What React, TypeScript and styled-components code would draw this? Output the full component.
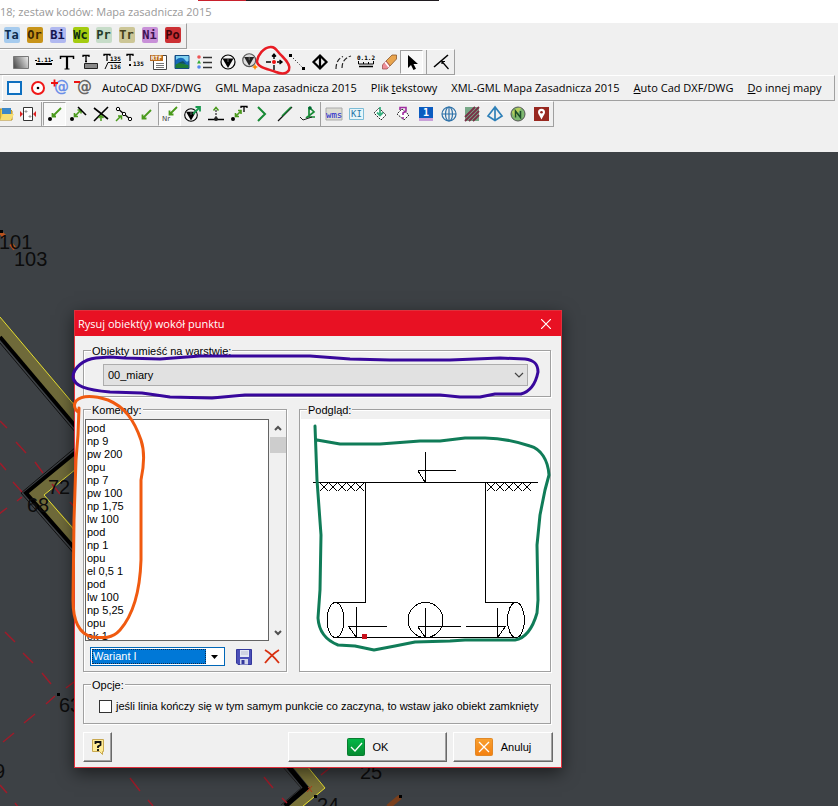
import React from "react";
import styled, { createGlobalStyle, css } from "styled-components";

const GlobalStyle = createGlobalStyle`
  *, *::before, *::after { box-sizing: border-box; }
  html, body, #root { height: 100%; }
  body { margin: 0; overflow: hidden; background: #3d4145; }
  button, select, textarea, input { font: inherit; color: inherit; margin: 0; }
`;

const uiFont = `"Open Sans", "Noto Sans", sans-serif`;
const dialogFont = `"Liberation Sans", Arial, sans-serif`;

const Page = styled.div`
  position: relative;
  display: flex;
  flex-direction: column;
  min-height: 100vh;
  overflow: hidden;
  font: 11px/16px ${uiFont};
  color: #000;
`;

const TopEdge = styled.div`
  display: grid;
  grid-template-columns: 198px 48px 193px 1fr;
  height: 1px;
  background: #fff;
`;
const EdgePart = styled.span<{ $color: string }>`
  background: ${(p) => p.$color};
`;

const TitleBar = styled.header`
  height: 22px;
  background: #fff;
  color: #999;
  line-height: 22px;
  white-space: nowrap;
`;

const Toolbars = styled.div`
  display: flex;
  flex-direction: column;
  align-items: flex-start;
  height: 129px;
  flex: none;
  background: #f0f0f0;
`;

const Toolbar = styled.div<{ $start: number; $end: number; $inset?: boolean; $lift?: boolean }>`
  display: flex;
  align-items: stretch;
  height: 26px;
  flex: none;
  padding: 0 ${(p) => p.$end}px ${(p) => (p.$lift ? 2 : 0)}px ${(p) => p.$start}px;
  border-top: 1px solid #fff;
  border-right: 1px solid #a0a0a0;
  border-bottom: 1px solid #a0a0a0;
  ${(p) => p.$inset && css`margin-left: 2px; border-left: 1px solid #fff;`}
`;

const ToolButton = styled.button<{ $pressed?: boolean }>`
  display: flex;
  align-items: center;
  justify-content: center;
  flex: none;
  width: 23px;
  padding: 0;
  border: 1px solid transparent;
  background: transparent;
  ${(p) =>
    p.$pressed &&
    css`
      background: #f8f8f8;
      border-color: #a0a0a0 #fff #fff #a0a0a0;
    `}
  svg { flex: none; display: block; }
`;

const Separator = styled.span<{ $gap: number }>`
  flex: none;
  width: 1px;
  margin: 0 ${(p) => p.$gap}px;
  background: #a0a0a0;
`;

const Badge = styled.span<{ $bg: string; $fg: string }>`
  width: 16px;
  height: 16px;
  border-radius: 2px;
  background: ${(p) => p.$bg};
  color: ${(p) => p.$fg};
  font: bold 12px/16px "DejaVu Sans Mono", monospace;
  text-align: center;
`;

const ExportMenus = styled.div`
  display: flex;
`;
const MenuButton = styled.button`
  flex: none;
  padding: 0 7px;
  border: 0;
  background: transparent;
  white-space: nowrap;
  line-height: 24px;
`;

const MapArea = styled.main`
  position: relative;
  flex: 1;
  background: #3d4145;
  overflow: hidden;
`;
const MapDrawing = styled.svg`
  position: absolute;
  top: 0;
  left: 0;
`;

const Dialog = styled.section`
  position: absolute;
  left: 74px;
  top: 310px;
  width: 488px;
  display: flex;
  flex-direction: column;
  border: 1px solid #e0303c;
  background: #f0f0f0;
  box-shadow: 0 5px 16px rgba(0, 0, 0, 0.55);
  font: 11px/13px ${dialogFont};
`;
const DialogTitle = styled.div`
  display: flex;
  justify-content: space-between;
  align-items: center;
  height: 25px;
  padding-left: 3px;
  background: #e81123;
  color: #fff;
  font: 11px/16px ${uiFont};
`;
const CloseButton = styled.button`
  display: flex;
  align-items: center;
  justify-content: center;
  width: 30px;
  height: 25px;
  padding: 0;
  border: 0;
  background: transparent;
`;
const DialogBody = styled.div`
  display: flex;
  flex-direction: column;
  gap: 7px;
  padding: 9px 8px 5px;
`;
const Groups = styled.div`
  display: flex;
  flex-direction: column;
  gap: 7px;
  margin-right: 2px;
`;
const Columns = styled.div`
  display: grid;
  grid-template-columns: 204px 1fr;
  gap: 12px;
`;

const Group = styled.fieldset<{ $pad: string }>`
  position: relative;
  margin: 5px 0 0;
  min-width: 0;
  border: 1px solid #a0a0a0;
  box-shadow: 1px 1px 0 #fff, inset 1px 1px 0 #fff;
  padding: ${(p) => p.$pad};
`;
const Legend = styled.span`
  position: absolute;
  left: 7px;
  top: -6px;
  padding: 0 1px;
  background: #f0f0f0;
  white-space: nowrap;
`;

const SelectFrame = styled.div`
  display: grid;
  align-items: center;
  height: 22px;
  border: 1px solid #adadad;
  background: #e1e1e1;
  > * { grid-area: 1 / 1; }
  svg { justify-self: end; margin-right: 3px; pointer-events: none; }
`;
const LayerSelect = styled.select`
  appearance: none;
  width: 100%;
  height: 20px;
  padding: 0 24px 0 4px;
  border: 0;
  background: transparent;
`;

const ListRow = styled.div`
  display: flex;
  gap: 1px;
  height: 222px;
`;
const CommandList = styled.textarea`
  flex: 1;
  min-width: 0;
  height: 222px;
  padding: 2px 2px 0 1px;
  border: 1px solid #646464;
  border-radius: 0;
  background: #fff;
  line-height: 13px;
  resize: none;
  overflow: hidden;
  outline: 0;
`;
const ScrollTrack = styled.div`
  display: grid;
  grid-template-rows: 18px 16px 1fr 17px;
  width: 16px;
`;
const ScrollButton = styled.button`
  display: flex;
  align-items: center;
  justify-content: center;
  padding: 0;
  border: 0;
  background: transparent;
  &:last-child { grid-row: 4; }
`;
const ScrollThumb = styled.span`
  background: #cdcdcd;
`;

const VariantRow = styled.div`
  display: flex;
  align-items: center;
  gap: 5px;
  padding: 6px 0 5px 5px;
`;
const VariantFrame = styled.div`
  display: flex;
  align-items: center;
  flex: none;
  width: 135px;
  height: 19px;
  margin-right: 2px;
  padding: 1px;
  border: 1px solid #0067b8;
  background: #fff;
`;
const VariantSelect = styled.select`
  appearance: none;
  flex: 1;
  min-width: 0;
  height: 15px;
  padding: 0;
  border: 1px dotted #0a2a50;
  border-radius: 0;
  outline: 0;
  background: #0078d7;
  color: #fff;
  line-height: 13px;
`;
const DropArrow = styled.svg`
  flex: none;
  margin: 0 5px;
`;
const IconButton = styled.button`
  display: flex;
  align-items: center;
  justify-content: center;
  flex: none;
  width: 23px;
  height: 18px;
  padding: 0;
  border: 0;
  background: transparent;
`;

const PreviewBox = styled.div`
  height: 252px;
  background: #fff;
  svg { display: block; margin: 0 auto; }
`;

const CheckLabel = styled.label`
  display: flex;
  align-items: center;
  gap: 4px;
  white-space: nowrap;
`;
const CheckBox = styled.input`
  appearance: none;
  flex: none;
  width: 13px;
  height: 13px;
  border: 1px solid #333;
  background: #fff;
  &:checked { background: #0078d7; }
`;

const ButtonRow = styled.div`
  display: flex;
  gap: 6px;
  padding-top: 1px;
`;
const PushButton = styled.button<{ $width: number }>`
  display: flex;
  align-items: center;
  justify-content: center;
  gap: 8px;
  width: ${(p) => p.$width}px;
  height: 30px;
  padding: 0;
  border: 1px solid;
  border-color: #fff #696969 #696969 #fff;
  box-shadow: inset -1px -1px 0 #a0a0a0;
  background: #f0f0f0;
`;
const Spacer = styled.span`
  flex: 1;
`;

const Markup = styled.svg`
  position: absolute;
  top: 0;
  left: 0;
  pointer-events: none;
`;

/* The first button of this bar is partly scrolled out at the window edge. */
const ScrolledTools = styled.div`
  display: flex;
  margin-left: -6px;
`;

const Ico = ({ children, size = 20 }: { children: React.ReactNode; size?: number }) => (
  <svg width={size} height={size} viewBox={`0 0 ${size} ${size}`} fill="none" aria-hidden="true">
    {children}
  </svg>
);

const tinyFont = { fontFamily: "DejaVu Sans Mono, monospace", fontWeight: "bold", fill: "#000" };
const G = "#4a9a1c";

const Compass = ({ gray }: { gray?: boolean }) => (
  <>
    <circle cx="10" cy="10" r="7" stroke={gray ? "#555" : "#000"} strokeWidth="1.2" fill={gray ? "#ddd" : "#f4f4f4"} />
    <path d="M4.500 6.500h11L10 16z" fill={gray ? "#222" : "#000"} />
    <path d="M10 6v4" stroke="#888" strokeWidth=".8" />
  </>
);

type Tool = { name: string; icon?: React.ReactNode; pressed?: boolean; sep?: boolean };

const drawTools: Tool[] = [
  { name: "Wypełnienie", icon: (
    <>
      <defs><linearGradient id="grad" x1="0" y1="0.6" x2="1" y2="0.2"><stop offset="0" stopColor="#555" /><stop offset="1" stopColor="#e8e8e8" /></linearGradient></defs>
      <path d="M2.500 4.500h15v12h-15z" fill="url(#grad)" stroke="#777" />
    </>) },
  { name: "Miara", icon: <><text x="3" y="10" fontSize="6" {...tinyFont}>1.11</text><path d="M1 8.500h2M17 8.500h2" stroke="#000" /><path d="M2 12h16" stroke="#000" strokeWidth="2" /></> },
  { name: "Tekst", icon: <><path d="M3.500 7V4.500h13V7" stroke="#000" strokeWidth="1.500" /><path d="M10 4V17" stroke="#000" strokeWidth="2.200" /><path d="M7.500 17h5" stroke="#000" /></> },
  { name: "Etykieta", icon: <><path d="M3 5V3.500h6V5M6 3.500V9.500M5 9.500h2" stroke="#000" strokeWidth="1.3" /><path d="M4.500 11.500h13v5h-13z" fill="#888" stroke="#222" /></> },
  { name: "Opis ułamkowy", icon: <><path d="M1 4V2.500h6V4M4 2.500V9" stroke="#000" strokeWidth="1.3" /><text x="7" y="9" fontSize="6" {...tinyFont}>135</text><path d="M2 17L5 10.500h13" stroke="#000" /><text x="7" y="17" fontSize="6" {...tinyFont}>136</text></> },
  { name: "Numer punktu", icon: <><path d="M1 4V2.500h6V4M4 2.500V9" stroke="#000" strokeWidth="1.3" /><path d="M3 12h2v2h-2z" fill="#000" /><text x="7" y="14" fontSize="6" {...tinyFont}>135</text></> },
  { name: "Tekst RTF", icon: <><path d="M4.500 3.500h13v14h-13z" fill="#fff" stroke="#444" /><path d="M7 11.500h8M7 13.500h8M7 15.500h8" stroke="#777" /><path d="M1 3h13v6H1z" fill="#b86a1c" /><text x="2" y="8" fontSize="6" {...tinyFont} fill="#fff">RTF</text></> },
  { name: "Obraz", icon: <><path d="M3 3.500h14v13H3z" fill="#1569b8" stroke="#134a80" /><path d="M4 8c3-3 7-3 9 0s3 1 3.500 1V4H4z" fill="#7fd0f0" /><path d="M3.500 13c3-3 6-2 8-1l5 1v3h-13z" fill="#1d7c35" /><path d="M6 11l5-2 3 3z" fill="#114f5c" /></> },
  { name: "Legenda", icon: <><path d="M8 5.500h9M8 10.500h9M8 15.500h9" stroke="#333" strokeWidth="1.3" /><circle cx="4" cy="5" r="1.800" fill="#e55" /><path d="M4 8l2 3.500H2z" fill="#3a3" /><circle cx="4" cy="15" r="1.800" fill="#58e" /></> },
  { name: "Symbol", icon: <Compass /> },
  { name: "Nowy symbol", icon: <><g transform="translate(-1 -1) scale(.92)"><Compass gray /></g><path d="M14 12l1 2 2 1-2 1-1 2-1-2-2-1 2-1z" fill="#f80" /></> },
  { name: "Obiekt wokół punktu", icon: <><path d="M10 2v5M10 13v5M2 10h5M13 10h5M8 4.500L10 2l2 2.500M15.500 8L18 10l-2.500 2" stroke="#000" strokeWidth="1.4" /><circle cx="10" cy="10" r="2" fill="#e11" /></> },
  { name: "Linia", icon: <><path d="M4 4l12 12" stroke="#000" strokeDasharray="1 2" /><path d="M2 2h3v3H2zM15 15h3v3h-3z" fill="#000" /></> },
  { name: "Romb", icon: <path d="M10 3.500L16.500 10 10 16.500 3.500 10zM10 4v12" stroke="#000" strokeWidth="2.200" /> },
  { name: "Łuk", icon: <path d="M3 17C3 10 6 6 10 4.500M9 16c0-5 2-10 9-12" stroke="#222" strokeWidth="1.2" strokeDasharray="5 2" /> },
  { name: "Skala", icon: <><text x="1" y="8" fontSize="6" {...tinyFont}>0.1.2</text><path d="M2.500 9v3h15V9M7.500 12v-2M12.500 12v-2" stroke="#000" /><path d="M3 14.500h14" stroke="#000" strokeWidth="1.500" /></> },
  { name: "Gumka", icon: <><path d="M7 9l6-6h4.500v4L11 14z" fill="#e9a54e" stroke="#8a552a" strokeWidth=".8" /><path d="M7 9l4 5-3 3H3.500v-4z" fill="#ee8e98" stroke="#a05050" strokeWidth=".8" /><path d="M6 10l4 5" stroke="#fff" strokeWidth="1.500" /></> },
  { name: "Wskaż", pressed: true, icon: <path d="M6 3v13l3-3 2.500 5 2.500-1.300L11.500 12H16z" fill="#000" /> },
  { name: "s1", sep: true },
  { name: "Prostopadła", icon: <><path d="M2 15L16 3" stroke="#000" strokeWidth="1.600" /><path d="M9.500 9l7 8M10 12V9.500H13" stroke="#000" strokeWidth="1.2" /></> },
];

const importTools: Tool[] = [
  { name: "Prostokąt", icon: <path d="M3 4h13v12H3z" fill="#f5faff" stroke="#0d6fc0" strokeWidth="2" /> },
  { name: "Okrąg", icon: <><circle cx="10" cy="10" r="6" fill="#fff" stroke="#f01818" strokeWidth="2" /><circle cx="10" cy="10" r="1.300" fill="#000" /></> },
  { name: "Dodaj atrybut", icon: <><text x="3" y="14" fontSize="15" fontFamily="DejaVu Sans, sans-serif" fontWeight="bold" fill="#6b8fe8">@</text><path d="M0 5h7M3.500 1.500v7" stroke="#e11" strokeWidth="1.800" /></> },
  { name: "Usuń atrybut", icon: <><text x="3" y="14" fontSize="15" fontFamily="DejaVu Sans, sans-serif" fontWeight="bold" fill="#666">@</text><path d="M0 4h6" stroke="#e11" strokeWidth="2" /></> },
];

const fileTools: Tool[] = [
  { name: "Otwórz", icon: <><path d="M4 5h10l2 2v9H4z" fill="#f1cd4a" stroke="#b48a1b" /><path d="M6 4h9v6H6z" fill="#3d88c8" /><path d="M4 16l3-6h11l-3 6z" fill="#f8df73" /></> },
  { name: "Arkusz", icon: <><path d="M4.500 3.500h9v13h-9z" fill="#fff" stroke="#333" /><path d="M7 6v3M5.500 7.500h3M11 11v3M9.500 12.500h3" stroke="#999" /><path d="M4 10L1 7v6zM14 10l3-3v6z" fill="#d22" /></> },
  { name: "s2", sep: true },
  { name: "Do punktu", pressed: true, icon: <><path d="M16 4L8 12M7.500 9v3.500H11" stroke={G} strokeWidth="1.800" /><circle cx="5" cy="15" r="2" fill="#000" /></> },
  { name: "Do linii", icon: <><path d="M6 13l7-7M6.500 9v3.500H10M9.500 6H13v3.500" stroke={G} strokeWidth="1.600" /><path d="M10 3l8 8" stroke="#000" strokeWidth="1.600" /><circle cx="4" cy="15" r="2" fill="#000" /></> },
  { name: "Przecięcie", icon: <><path d="M3 4l14 11M17 3L3 17" stroke="#000" strokeWidth="1.600" /><path d="M10 17v-5M7.500 14L10 11.500l2.500 2.500" stroke={G} strokeWidth="1.500" /></> },
  { name: "Środek", icon: <><path d="M3 4l13 11" stroke="#000" strokeWidth="1.300" /><circle cx="4" cy="5" r="1.700" fill="#fff" stroke="#000" /><circle cx="10" cy="10" r="1.700" fill="#fff" stroke="#000" /><circle cx="16" cy="15" r="1.700" fill="#fff" stroke="#000" /><path d="M2 17l5-5M4 12h3.500v3.500" stroke={G} strokeWidth="1.500" /></> },
  { name: "Dowolnie", icon: <path d="M14 6l-8 8M5.500 10.500v4h4" stroke={G} strokeWidth="1.800" /> },
  { name: "Numeruj", pressed: true, icon: <><path d="M17 3l-7 7M9.500 6.500v4h4" stroke={G} strokeWidth="1.800" /><text x="2" y="17" fontSize="7" fontFamily="DejaVu Sans, sans-serif" fill="#444">Nr</text></> },
  { name: "Do symbolu", icon: <><g transform="translate(-1 2) scale(.9)"><Compass /></g><path d="M10 10l7-7M12.500 3H17v4.500" stroke="#1a9a50" strokeWidth="1.800" /></> },
  { name: "Rzut", icon: <><path d="M2 15.500h16" stroke="#000" strokeWidth="1.500" /><path d="M10 14V4" stroke="#000" strokeDasharray="2 1" /><path d="M7.500 6.500L10 3.500l2.500 3" stroke={G} strokeWidth="1.500" /><circle cx="10" cy="15" r="2" fill="#222" /></> },
  { name: "Do tekstu", icon: <><path d="M6 13l6-6M6.500 9v3.500H10M9 6.500h3V10" stroke={G} strokeWidth="1.600" /><path d="M12 4V2.500h6V4M15 2.500V8" stroke="#000" strokeWidth="1.300" /><circle cx="4" cy="15" r="2" fill="#000" /></> },
  { name: "Kąt", icon: <path d="M6 3l7 7-7 7" stroke="#178a35" strokeWidth="2" /> },
  { name: "Odcinek", icon: <><path d="M3 17L17 3" stroke="#111" strokeWidth="1.300" /><path d="M7 12l9-9" stroke="#178a35" strokeWidth="1.600" /></> },
  { name: "Trójkąt", icon: <><path d="M11 3v10h6M11 3l5 5-8 6" stroke="#178a35" strokeWidth="1.700" /><path d="M2 13l3 3 9-3" stroke="#222" /><circle cx="12" cy="4" r="1.700" fill="#063" /></> },
  { name: "s3", sep: true },
  { name: "WMS", icon: <><path d="M2 4h16v12H2z" fill="#dcdcd4" stroke="#aaa" /><text x="2" y="14" fontSize="9" fontFamily="DejaVu Sans Mono, monospace" fill="#22c">wms</text></> },
  { name: "KI", icon: <><path d="M2.500 4.500h14v11h-14z" fill="#e8f5fa" stroke="#7cbcd6" /><text x="4" y="13" fontSize="9" fontFamily="DejaVu Sans Mono, monospace" fill="#2878a8">KI</text></> },
  { name: "Pobierz", icon: <><path d="M9 4l7 7-5 5-7-7z" fill="#fff" stroke="#222" strokeDasharray="2 1" /><path d="M10 3v7M7 8.500l3 3 3-3" stroke="#3ab080" strokeWidth="1.800" /></> },
  { name: "Zapytaj", icon: <><path d="M9 5l7 6-5 5-7-6z" fill="#fff" stroke="#222" strokeDasharray="2 1" /><path d="M7 6V3.500h6V7l-3 2v2M10 13v2" stroke="#a02ca0" strokeWidth="1.600" /></> },
  { name: "Warstwa 1", icon: <><path d="M3 3h14v11H3z" fill="#0b5cc0" /><path d="M3 14h14v3H3z" fill="#c8a0d8" /><text x="7" y="12" fontSize="10" {...tinyFont} fill="#fff">1</text></> },
  { name: "Globus", icon: <g stroke="#2d71a8" strokeWidth="1.200"><circle cx="10" cy="10" r="7" /><ellipse cx="10" cy="10" rx="3.500" ry="7" /><path d="M10 3v14M3 10h14" /></g> },
  { name: "Pokrycie", icon: <><path d="M3 3h14v14H3z" fill="#78a888" /><path d="M3 13L13 3M3 17L17 3M7 17L17 7M11 17l6-6" stroke="#7a3048" strokeWidth="1.800" /></> },
  { name: "Trójkąty", icon: <path d="M10 3L3 12l7 4.500 7-4.500zM10 3v13" stroke="#2f80b8" strokeWidth="1.700" /> },
  { name: "Geoportal", icon: <><circle cx="10" cy="10" r="7" fill="#7eb870" stroke="#555" /><path d="M4 8c3-4 7-5 9-4l-6 10z" fill="#b6ce5c" /><path d="M7.500 13.500V7l5 6.500V7" stroke="#1c4c28" strokeWidth="1.500" /></> },
  { name: "Lokalizacja", icon: <><path d="M3 3h15v14H3z" fill="#982820" /><path d="M10.500 15.500C9 12 7 10.500 7 8.300a3.500 3.500 0 0 1 7 0c0 2.200-2 3.700-3.500 7.200z" fill="#fff" /><circle cx="10.500" cy="8.300" r="1.300" fill="#982820" /></> },
];

const badges = [
  ["Ta", "#a6cbee", "#0c2c4c"],
  ["Or", "#c8941a", "#3c2600"],
  ["Bi", "#b0b8f0", "#141450"],
  ["Wc", "#a4cc10", "#0c2c10"],
  ["Pr", "#c6dcc8", "#243c28"],
  ["Tr", "#ccc696", "#44401c"],
  ["Ni", "#c890d8", "#3c1450"],
  ["Po", "#cc3034", "#3c0408"],
];

const exportMenus: [string, string, string][] = [
  ["AutoCAD DXF/DWG", "", ""],
  ["GML Mapa zasadnicza 2015", "", ""],
  ["Plik ", "t", "ekstowy"],
  ["XML-GML Mapa Zasadnicza 2015", "", ""],
  ["", "A", "uto Cad DXF/DWG"],
  ["", "D", "o innej mapy"],
];

const commands = [
  "pod", "np 9", "pw 200", "opu", "np 7", "pw 100", "np 1,75", "lw 100", "pod",
  "np 1", "opu", "el 0,5 1", "pod", "lw 100", "np 5,25", "opu", "ok 1",
].join("\n");

const Tools = ({ items, gap = 1 }: { items: Tool[]; gap?: number }) => (
  <>
    {items.map((t) =>
      t.sep ? (
        <Separator key={t.name} $gap={gap} />
      ) : (
        <ToolButton key={t.name} $pressed={t.pressed} aria-label={t.name}>
          <Ico>{t.icon}</Ico>
        </ToolButton>
      )
    )}
  </>
);

const mapLabels: [string, number, number][] = [
  ["101", -1, 249], ["103", 14, 266], ["72", 48, 494], ["68", 27, 512],
  ["63", 59, 712], ["9", -6, 778], ["25", 360, 779], ["24", 317, 812],
];

const MapPicture = () => (
  <MapDrawing width="838" height="654" viewBox="0 152 838 654" fill="none" aria-hidden="true">
    <path d="M0 317L76 407V428L0 337z" fill="#6f6a3a" />
    <path d="M0 317L76 407" stroke="#e4dc30" />
    <path d="M0 337L76 427" stroke="#000" strokeWidth="4" />
    <path d="M0 343L76 433" stroke="#111" />
    <path d="M76 452L27 494l49 56v-20L44 495l32-26z" fill="#6f6a3a" />
    <path d="M76 469L44 495l32 37" stroke="#e4dc30" />
    <path d="M76 452L26 493l50 57" stroke="#000" strokeWidth="4" />
    <path d="M76 447L21 493l55 63" stroke="#111" />
    <path d="M292 766l18 22-21 18h15l21-18-18-22z" fill="#7a7339" />
    <path d="M307 766l18 22-22 18" stroke="#e4dc30" />
    <path d="M288 766l18 22-21 18" stroke="#000" strokeWidth="5" />
    <path d="M282 766l19 22-20 17" stroke="#222" />
    <path
      d="M0 421l7 7M16 442l10 11M35 462l8 11M52 484l8 10M70 502l6 7M0 463l6 7M13 482l9 10M22 497l-5 4M7 508l-8 6M5 632l10 10M23 653l10 10M42 673l9 11M74 682l-8 6M55 696l-9 8M35 714l-11 9M14 733L3 742M0 785l7 8M15 803l3 4M130 778l10 13M148 800l5 6M264 777l9 11M282 798l5 5M331 767l-10 8"
      stroke="#9e1c2a" strokeWidth="1.500"
    />
    <path d="M0 232l5 5M11 244l4 5" stroke="#b8521c" strokeWidth="4" />
    <path d="M400 797l-12 10" stroke="#7a3f1c" strokeWidth="5" />
    <path d="M308 787l4 5M312 786l-5 6" stroke="#b33818" />
    <path d="M57 693h3v3h-3zM314 795h3v3h-3zM399 795h3v3h-3zM0 230h3v3H0z" fill="#000" />
    {mapLabels.map(([t, x, y]) => (
      <text key={t} x={x} y={y} fontSize="20" fontFamily="Liberation Sans, Arial, sans-serif" fill="#0c0c0c">{t}</text>
    ))}
  </MapDrawing>
);

const hatch = (x: number) =>
  [0, 1, 2, 3, 4].map((i) => `M${x + i * 9} 491l8-8M${x + i * 9} 483l8 8`).join("");

const Preview = () => (
  <svg width="250" height="252" viewBox="300 419 250 252" fill="none" role="img" aria-label="Podgląd obiektu">
    <g stroke="#000" strokeWidth="1" shapeRendering="crispEdges">
      <path d="M313 482.500h225M365.500 482v120M485.500 482v120M336 602.500h30M485 602.500h31M336 637.500h180" />
      <path d="M425.500 452v30M418 470.500h38M356.500 607v30M348 626.500h39M425.500 608v29M418 626.500h43M497.500 608v29M466 626.500h40" />
      <ellipse cx="335.500" cy="620" rx="8.500" ry="17.500" />
      <ellipse cx="516" cy="620" rx="8.500" ry="17.500" />
      <circle cx="425.500" cy="620" r="17.500" />
      <path d="M418 471l7 11M349 627l7 10M418 627l7 10M505 627l-7 10" />
      <path d={hatch(320) + hatch(487)} />
    </g>
    <path d="M362 634h5v5h-5z" fill="#c8101c" />
  </svg>
);

export default function App() {
  return (
    <Page>
      <GlobalStyle />
      <TopEdge>
        <EdgePart $color="#fff" />
        <EdgePart $color="#c8202c" />
        <EdgePart $color="#201c20" />
      </TopEdge>
      <TitleBar>18; zestaw kodów: Mapa zasadnicza 2015</TitleBar>
      <Toolbars>
        <Toolbar $start={0} $end={2} $lift>
          {badges.map(([t, bg, fg]) => (
            <ToolButton key={t}>
              <Badge $bg={bg} $fg={fg}>{t}</Badge>
            </ToolButton>
          ))}
        </Toolbar>
        <Toolbar $start={9} $end={1}>
          <Tools items={drawTools} gap={3} />
        </Toolbar>
        <Toolbar $start={0} $end={5} $inset>
          <Tools items={importTools} />
          <ExportMenus>
            {exportMenus.map(([a, u, b]) => (
              <MenuButton key={a + u + b}>
                {a}
                {u && <u>{u}</u>}
                {b}
              </MenuButton>
            ))}
          </ExportMenus>
        </Toolbar>
        <Toolbar $start={0} $end={1}>
          <ScrolledTools>
            <Tools items={fileTools} />
          </ScrolledTools>
        </Toolbar>
      </Toolbars>
      <MapArea>
        <MapPicture />
      </MapArea>

      <Dialog role="dialog" aria-labelledby="dialog-title">
        <DialogTitle>
          <span id="dialog-title">Rysuj obiekt(y) wokół punktu</span>
          <CloseButton aria-label="Zamknij">
            <svg width="10" height="10" viewBox="0 0 10 10"><path d="M0 0l10 10M10 0L0 10" stroke="#fff" strokeWidth="1.200" /></svg>
          </CloseButton>
        </DialogTitle>
        <DialogBody>
          <Groups>
            <Group $pad="13px 22px 10px 19px">
              <Legend as="label" htmlFor="layer">Obiekty umieść na warstwie:</Legend>
              <SelectFrame>
                <LayerSelect id="layer">
                  <option>00_miary</option>
                </LayerSelect>
                <svg width="10" height="6" viewBox="0 0 10 6" fill="none"><path d="M1 1l4 4 4-4" stroke="#444" strokeWidth="1.200" /></svg>
              </SelectFrame>
            </Group>
            <Columns>
              <Group $pad="9px 0 0 1px">
                <Legend as="label" htmlFor="commands">Komendy:</Legend>
                <ListRow>
                  <CommandList id="commands" defaultValue={commands} spellCheck={false} />
                  <ScrollTrack>
                    <ScrollButton aria-label="W górę"><svg width="8" height="6" viewBox="0 0 8 6" fill="none"><path d="M1 5l3-3 3 3" stroke="#505050" strokeWidth="2" /></svg></ScrollButton>
                    <ScrollThumb />
                    <ScrollButton aria-label="W dół"><svg width="8" height="6" viewBox="0 0 8 6" fill="none"><path d="M1 1l3 3 3-3" stroke="#505050" strokeWidth="2" /></svg></ScrollButton>
                  </ScrollTrack>
                </ListRow>
                <VariantRow>
                  <VariantFrame>
                    <VariantSelect aria-label="Wariant">
                      <option>Wariant I</option>
                    </VariantSelect>
                    <DropArrow width="7" height="4" viewBox="0 0 7 4"><path d="M0 0h7L3.500 4z" fill="#000" /></DropArrow>
                  </VariantFrame>
                  <IconButton aria-label="Zapisz">
                    <svg width="16" height="16" viewBox="0 0 16 16">
                      <path d="M.5.500h15v15H2l-1.500-1.500z" fill="#4c50b8" stroke="#34389c" />
                      <path d="M4 1h9v7H4z" fill="#e4e8f4" />
                      <path d="M5 3h7M5 5h7" stroke="#b8bcd0" />
                      <path d="M4 10h8v5.500H4z" fill="#d4d8ec" />
                      <path d="M5.500 11h3v4h-3z" fill="#34389c" />
                    </svg>
                  </IconButton>
                  <IconButton aria-label="Usuń">
                    <svg width="16" height="15" viewBox="0 0 16 15" fill="none">
                      <path d="M1 1c5 3 10 8 14 13" stroke="#d83010" strokeWidth="1.800" />
                      <path d="M15 1C10 4 5 9 1 14" stroke="#d83010" strokeWidth="1.800" />
                    </svg>
                  </IconButton>
                </VariantRow>
              </Group>
              <Group $pad="9px 0 0">
                <Legend>Podgląd:</Legend>
                <PreviewBox><Preview /></PreviewBox>
              </Group>
            </Columns>
            <Group $pad="15px 15px 10px">
              <Legend>Opcje:</Legend>
              <CheckLabel>
                <CheckBox type="checkbox" />
                jeśli linia kończy się w tym samym punkcie co zaczyna, to wstaw jako obiekt zamknięty
              </CheckLabel>
            </Group>
          </Groups>
          <ButtonRow>
            <PushButton $width={29} aria-label="Pomoc">
              <svg width="14" height="16" viewBox="0 0 14 16">
                <path d="M1.500.500h11v12h-1v3l-3-3h-7z" fill="#ffec98" stroke="#c8a850" />
                <path d="M4.500 5V3h5v3L7 7.500V9M7 10v2" stroke="#111" strokeWidth="1.800" fill="none" />
              </svg>
            </PushButton>
            <Spacer />
            <PushButton $width={159}>
              <svg width="18" height="18" viewBox="0 0 18 18" fill="none">
                <defs><linearGradient id="ok" x2="0" y2="1"><stop stopColor="#04b848" /><stop offset="1" stopColor="#068a30" /></linearGradient></defs>
                <rect x=".500" y=".500" width="17" height="17" rx="1" fill="url(#ok)" stroke="#0a7c30" />
                <path d="M4 9l4 4 7-8" stroke="#fff" strokeWidth="1.300" />
              </svg>
              OK
            </PushButton>
            <PushButton $width={100}>
              <svg width="18" height="18" viewBox="0 0 18 18" fill="none">
                <defs><linearGradient id="no" x2="0" y2="1"><stop stopColor="#f8a030" /><stop offset="1" stopColor="#f48010" /></linearGradient></defs>
                <rect x=".500" y=".500" width="17" height="17" rx="1" fill="url(#no)" stroke="#e08828" />
                <path d="M4 4l10 10M14 4L4 14" stroke="#fff" strokeWidth="1.300" />
              </svg>
              Anuluj
            </PushButton>
          </ButtonRow>
        </DialogBody>
      </Dialog>

      <Markup width="838" height="806" viewBox="0 0 838 806" fill="none" strokeLinecap="round" strokeLinejoin="round" aria-hidden="true">
        <path stroke="#e81c24" strokeWidth="2.500" d="M257 61C258 55 263 48 270 47C276 46 277 52 282 56C286 60 291 66 289 70C286 75 281 74 276 72C269 69 257 68 257 61z" />
        <path stroke="#38089c" strokeWidth="3" d="M96 358C84 359 73 368 73 377C74 386 86 390 110 392L142 393L170 397L212 398L245 395L310 395H440L460 397H480L495 394H521C532 391 536 382 538 372C538 363 533 360 525 359L500 358L450 360H390L350 359L310 356H200L160 359L125 358L110 357z" />
        <path stroke="#f05a10" strokeWidth="3" d="M79 408L78 435L76 460L74 520L73 600C73 622 80 634 92 637C103 638 112 639 120 630C134 614 140 590 141 560L141 480C144 466 145 452 141 440C134 420 125 407 108 400C95 396 82 395 76 401C73 405 75 410 78 412" />
        <path stroke="#107c58" strokeWidth="3" d="M315 426L317 480L321 535L320 590L318 618C319 634 328 641 338 645L355 646L374 650L395 646L415 642L450 641L465 640H515C527 638 533 627 537 613L538 600L537 545L540 515L545 490L549 475C548 460 541 449 530 446C515 441 500 438 485 438L465 438L440 441H420L380 444H340L317 440" />
      </Markup>
    </Page>
  );
}
